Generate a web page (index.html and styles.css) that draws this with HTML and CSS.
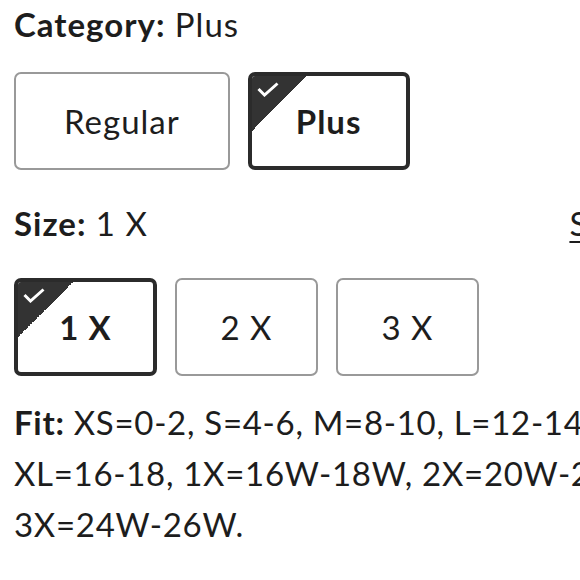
FILE: index.html
```html
<!DOCTYPE html>
<html lang="en">
<head>
    <meta charset="UTF-8">
    <meta name="viewport" content="width=device-width, initial-scale=1.0">
    <title>Product variants</title>
    <link rel="stylesheet" href="styles.css">
</head>
<body>

    <div class="variants">

        <div class="variant-label">
            <span><b>Category:</b> Plus</span>
        </div>
        <div class="options">
            <button class="option cat-option">Regular</button>
            <button class="option cat-option selected">
                <svg class="check" viewBox="0 0 22 15" width="22" height="15"><path d="M1.5 7 L7.5 13 L20.5 1.5" fill="none" stroke="#fff" stroke-width="3"/></svg>
                Plus
            </button>
        </div>

        <div class="variant-label size-label">
            <span><b>Size:</b> 1 X</span>
            <a href="#" class="size-chart">Size chart</a>
        </div>
        <div class="options size-options">
            <button class="option size-option selected">
                <svg class="check" viewBox="0 0 22 15" width="22" height="15"><path d="M1.5 7 L7.5 13 L20.5 1.5" fill="none" stroke="#fff" stroke-width="3"/></svg>
                1 X
            </button>
            <button class="option size-option">2 X</button>
            <button class="option size-option">3 X</button>
        </div>

        <p class="fit">
            <b>Fit:</b> XS=0-2, S=4-6, M=8-10, L=12-14,<br>
            XL=16-18, 1X=16W-18W, 2X=20W-22W,<br>
            3X=24W-26W.
        </p>

    </div>

</body>
</html>
```

FILE: styles.css
```css
body {
    margin: 0;
    padding: 0;
    overflow: hidden;
    background: #fff;
    color: #1d1d1d;
    font-family: Lato, "Noto Sans", sans-serif;
}

.variants {
    width: 706px;
    padding: 0 14px;
    letter-spacing: 1px;
}

.variant-label {
    display: flex;
    justify-content: space-between;
    align-items: baseline;
    font-size: 33px;
    line-height: 40px;
    padding-top: 4px;
}

.variant-label b {
    font-weight: 700;
}

.size-label {
    padding-top: 33px;
}

.size-chart {
    color: #1d1d1d;
    text-decoration: underline;
    text-underline-offset: 5px;
    text-decoration-thickness: 2px;
}

.options {
    display: flex;
    gap: 18px;
    margin-top: 28px;
}

.size-options {
    margin-top: 35px;
}

.option {
    position: relative;
    overflow: hidden;
    box-sizing: border-box;
    height: 98px;
    padding: 0 48px;
    display: flex;
    align-items: center;
    justify-content: center;
    background: #fff;
    border: 2px solid #999;
    border-radius: 7px;
    font-family: inherit;
    font-size: 33px;
    letter-spacing: 1px;
    color: #1d1d1d;
}

.option.selected {
    padding: 0 44px;
    border: 4px solid #2b2b2b;
    font-weight: 700;
}

/* corner flag on the chosen option */
.option.selected::before {
    content: "";
    position: absolute;
    top: 0;
    left: 0;
    width: 55px;
    height: 55px;
    background: linear-gradient(135deg, #333 50%, transparent 50%);
}

.check {
    position: absolute;
    top: 6px;
    left: 5px;
    z-index: 1;
}

.size-option {
    width: 143px;
    padding: 0;
}

.size-option.selected {
    padding: 0;
}

.fit {
    margin: 21px 0 0;
    font-size: 33px;
    line-height: 51px;
    letter-spacing: 0.7px;
}
```
